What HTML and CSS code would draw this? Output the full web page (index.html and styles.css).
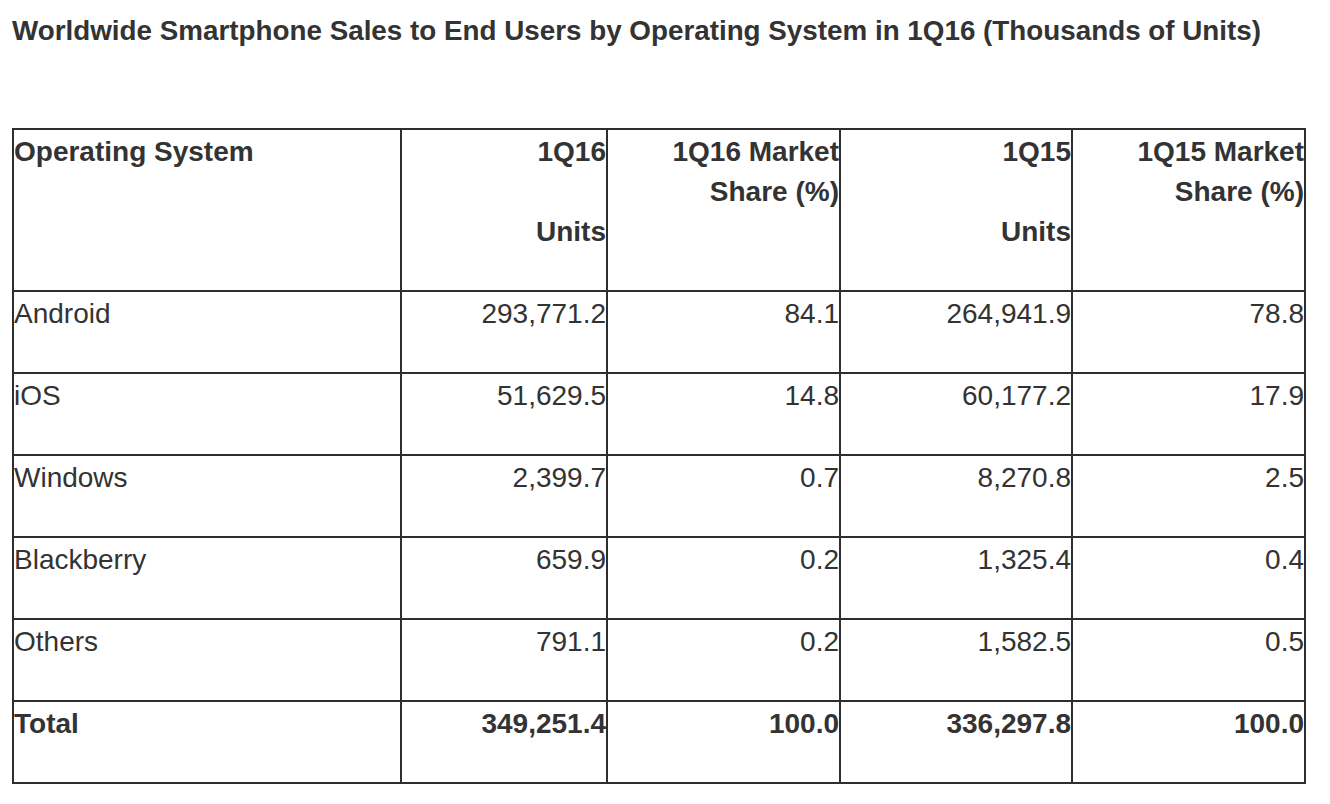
FILE: index.html
```html
<!DOCTYPE html>
<html>
<head>
<meta charset="utf-8">
<title>Worldwide Smartphone Sales</title>
<link rel="stylesheet" href="styles.css">
</head>
<body>
<div class="page">
  <h1 class="title">Worldwide Smartphone Sales to End Users by Operating System in 1Q16 (Thousands of Units)</h1>
  <table class="sales">
    <colgroup>
      <col class="c-os">
      <col class="c-units">
      <col class="c-share">
      <col class="c-units2">
      <col class="c-share2">
    </colgroup>
    <thead>
      <tr>
        <th class="left"><p>Operating System</p></th>
        <th><p>1Q16</p><p>Units</p></th>
        <th><p>1Q16 Market Share (%)</p></th>
        <th><p>1Q15</p><p>Units</p></th>
        <th><p>1Q15 Market Share (%)</p></th>
      </tr>
    </thead>
    <tbody>
      <tr><td class="left">Android</td><td>293,771.2</td><td>84.1</td><td>264,941.9</td><td>78.8</td></tr>
      <tr><td class="left">iOS</td><td>51,629.5</td><td>14.8</td><td>60,177.2</td><td>17.9</td></tr>
      <tr><td class="left">Windows</td><td>2,399.7</td><td>0.7</td><td>8,270.8</td><td>2.5</td></tr>
      <tr><td class="left">Blackberry</td><td>659.9</td><td>0.2</td><td>1,325.4</td><td>0.4</td></tr>
      <tr><td class="left">Others</td><td>791.1</td><td>0.2</td><td>1,582.5</td><td>0.5</td></tr>
      <tr class="total"><td class="left">Total</td><td>349,251.4</td><td>100.0</td><td>336,297.8</td><td>100.0</td></tr>
    </tbody>
  </table>
</div>
</body>
</html>
```

FILE: styles.css
```css
html, body {
  margin: 0;
  padding: 0;
  background: #ffffff;
}

.page {
  padding: 11px 12px 0 12px;
  font-family: "Liberation Sans", Arial, Helvetica, sans-serif;
  color: #333333;
}

.title {
  margin: 0 0 77px 0;
  font-size: 27.8px;
  line-height: 40px;
  font-weight: bold;
  color: #333333;
}

.sales {
  border-collapse: collapse;
  table-layout: fixed;
  width: 1294px;
  font-size: 28px;
  line-height: 40px;
}

.c-os { width: 388px; }
.c-units { width: 206px; }
.c-share { width: 233px; }
.c-units2 { width: 232px; }
.c-share2 { width: 233px; }

.sales th,
.sales td {
  border: 2px solid #2e2e2e;
  padding: 2px 0 38px 0;
  vertical-align: top;
  text-align: right;
}

.sales th {
  font-weight: bold;
}

.sales th p {
  margin: 0;
}

.sales th p + p {
  margin-top: 40px;
}

.sales .left {
  text-align: left;
}

.sales .total td {
  font-weight: bold;
}
```
